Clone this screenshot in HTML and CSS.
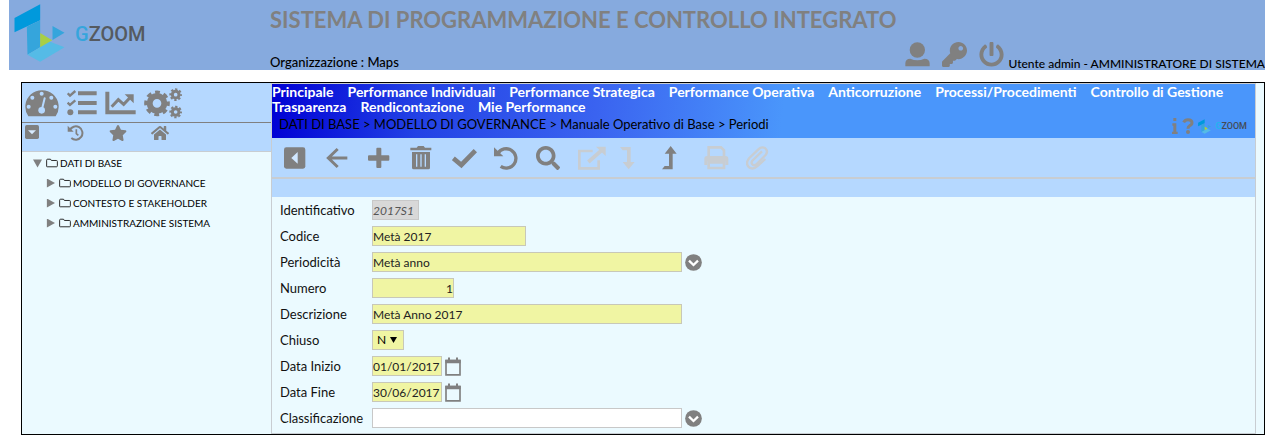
FILE: index.html
```html
<!DOCTYPE html>
<html lang="it">
<head>
<meta charset="utf-8">
<title>GZOOM - Periodi</title>
<link rel="stylesheet" href="styles.css">
</head>
<body>
<svg class="defs" aria-hidden="true">
  <symbol id="logo" viewBox="42 13 152 174">
    <path fill="#0099dc" d="M43 55L120 14V62L43 98z"/>
    <path fill="#35a5dc" d="M80 81L120 62V143L82 165z"/>
    <path fill="#55bbe6" d="M82 165L120 143L138 122L193 143L120 186z"/>
    <path fill="#a8cf45" d="M120 100L156 122L120 143z"/>
    <path fill="#35a5dc" d="M157 79L193 99L157 121z"/>
  </symbol>
  <symbol id="chevron" viewBox="0 0 51 51">
    <circle cx="25.500" cy="25.500" r="25" fill="#808080"/>
    <path d="M12 20L25.500 33L39 20" fill="none" stroke="#fff" stroke-width="7"/>
  </symbol>
  <symbol id="calendar" viewBox="0 0 48 56">
    <path d="M3 10H45V53H3z" fill="none" stroke="#808080" stroke-width="5"/>
    <path d="M1 8H47V18H1zM9 1h6v10H9zM33 1h6v10h-6z" fill="#808080"/>
  </symbol>
  <symbol id="folder" viewBox="0 0 38 30">
    <path d="M2 26V6Q2 3 5 3H13Q16 3 17 7H33Q36 7 36 10V24Q36 27 33 27H4Q2 27 2 26z" fill="none" stroke="#222" stroke-width="3"/>
  </symbol>
</svg>

<header class="header">
  <a class="brand" href="#"><svg class="brand-mark"><use href="#logo"/></svg><span class="brand-name"><span class="brand-g">G</span>ZOOM</span></a>
  <div class="heading">
    <h1>SISTEMA DI PROGRAMMAZIONE E CONTROLLO INTEGRATO</h1>
    <div class="subheading">
      <p>Organizzazione : Maps</p>
      <div class="user">
        <div class="user-tools">
          <button class="icon" aria-label="Utente"><svg width="25" height="25" viewBox="0 0 75 75"><circle cx="37" cy="24" r="23"/><path d="M1 73V64Q1 50 16 50Q37 59 58 50Q74 50 74 64V73z"/></svg></button>
          <button class="icon" aria-label="Password"><svg width="25" height="25" viewBox="0 0 512 512"><path d="M512 176C512 273 433 352 336 352c-11 0-22-1-33-3l-24 27A24 24 0 0 1 261 384H224v40c0 13-11 24-24 24h-40v40c0 13-11 24-24 24H24c-13 0-24-11-24-24v-78c0-6 3-12 7-17l162-162C163 214 160 195 160 176 160 79 239 0 336 0 433 0 512 79 512 176zM336 128c0 27 21 48 48 48s48-21 48-48-21-48-48-48-48 21-48 48z"/></svg></button>
          <button class="icon" aria-label="Esci"><svg width="25" height="25" viewBox="0 0 512 512"><path d="M400 54c63 45 104 119 104 202 0 137-111 248-248 248C120 504 8 393 8 256 8 173 49 99 112 54c12-8 28-5 35 8L163 90c6 11 3 24-7 31-42 31-68 80-68 135 0 92 75 168 168 168 92 0 169-74 168-169 0-52-25-102-68-134-10-7-12-21-7-31l16-28c7-12 23-16 35-8zM296 264V24c0-13-11-24-24-24h-32c-13 0-24 11-24 24v240c0 13 11 24 24 24h32c13 0 24-11 24-24z"/></svg></button>
        </div>
        <span>Utente admin - AMMINISTRATORE DI SISTEMA</span>
      </div>
    </div>
  </div>
</header>

<div class="workspace">
  <aside class="sidebar">
    <div class="side-tools">
      <div class="side-main">
        <button class="icon" aria-label="Cruscotto"><svg width="34" height="28" viewBox="76 264 102 84"><path d="M86 346A50 50 0 1 1 168 346z"/><g fill="#b5d8ff"><circle cx="87" cy="317" r="6"/><circle cx="98" cy="290" r="6"/><circle cx="126" cy="278" r="6"/><circle cx="155" cy="290" r="6"/><circle cx="167" cy="317" r="6"/><circle cx="126" cy="328" r="10"/></g><path d="M127 324L135 292" stroke="#b5d8ff" stroke-width="6" stroke-linecap="round"/></svg></button>
        <button class="icon" aria-label="Attività"><svg width="30" height="26" viewBox="200 266 90 78"><path d="M233 270h56v12h-56zM233 299h56v12h-56zM233 327h56v12h-56z"/><circle cx="210" cy="333" r="9"/><path d="M202 276L209 283L225 269M202 304L209 311L225 297" fill="none" stroke="#808080" stroke-width="7"/></svg></button>
        <button class="icon" aria-label="Grafici"><svg width="31" height="24" viewBox="314 268 93 72"><path d="M321 270V332H406" fill="none" stroke="#808080" stroke-width="12"/><path d="M334 315L354 294L370 308L391 286" fill="none" stroke="#808080" stroke-width="9"/><path d="M373 278H400V305z"/></svg></button>
        <button class="icon" aria-label="Impostazioni"><svg width="39" height="31" viewBox="431 259 117 93"><g fill="none" stroke="#808080"><circle cx="470" cy="305" r="22" stroke-width="18"/><circle cx="470" cy="305" r="33" stroke-width="11" pathLength="160" stroke-dasharray="11 9" stroke-dashoffset="5"/><circle cx="526" cy="279" r="10" stroke-width="9"/><circle cx="526" cy="279" r="16" stroke-width="6" pathLength="160" stroke-dasharray="11 9" stroke-dashoffset="5"/><circle cx="526" cy="331" r="10" stroke-width="9"/><circle cx="526" cy="331" r="16" stroke-width="6" pathLength="160" stroke-dasharray="11 9" stroke-dashoffset="5"/></g></svg></button>
      </div>
      <div class="side-sub">
        <button class="icon" aria-label="Menu"><svg width="14" height="14" viewBox="0 0 42 42"><rect width="42" height="42" rx="5"/><path d="M9 16H33L21 28z" fill="#d8ebff"/></svg></button>
        <button class="icon" aria-label="Cronologia"><svg width="17" height="16" viewBox="0 0 51 48"><path d="M8 16A20 20 0 1 1 13 39" fill="none" stroke="#808080" stroke-width="6"/><path d="M2 2V20H20z"/><path d="M28 13V26L34 31" fill="none" stroke="#808080" stroke-width="5"/></svg></button>
        <button class="icon" aria-label="Preferiti"><svg width="18" height="16" viewBox="0 0 576 512"><path d="M259 18L194 150 48 171c-26 4-37 36-18 55l106 103-25 146c-5 26 23 46 46 34L288 440l131 69c23 12 51-7 46-34l-25-146 106-103c19-19 9-51-18-55L382 150 317 18c-12-24-46-24-58 0z"/></svg></button>
        <button class="icon" aria-label="Home"><svg width="18" height="16" viewBox="0 0 576 512"><path d="M280 148L96 300V464a16 16 0 0 0 16 16h112a16 16 0 0 0 16-16V368a16 16 0 0 1 16-16h64a16 16 0 0 1 16 16v96a16 16 0 0 0 16 16H464a16 16 0 0 0 16-16V300L296 148a12 12 0 0 0-16 0zM572 251L488 183V44a12 12 0 0 0-12-12h-56a12 12 0 0 0-12 12v73L318 43a48 48 0 0 0-61 0L4 251a12 12 0 0 0-1 17l25 31A12 12 0 0 0 45 301L280 107a12 12 0 0 1 16 0L531 301a12 12 0 0 0 17-2l25-31a12 12 0 0 0-1-17z"/></svg></button>
      </div>
    </div>
    <ul class="tree">
      <li><span class="caret open"></span><svg class="folder"><use href="#folder"/></svg>DATI DI BASE</li>
      <li class="child"><span class="caret"></span><svg class="folder"><use href="#folder"/></svg>MODELLO DI GOVERNANCE</li>
      <li class="child"><span class="caret"></span><svg class="folder"><use href="#folder"/></svg>CONTESTO E STAKEHOLDER</li>
      <li class="child"><span class="caret"></span><svg class="folder"><use href="#folder"/></svg>AMMINISTRAZIONE SISTEMA</li>
    </ul>
  </aside>

  <main class="main">
    <div class="banner">
      <nav class="menu">
        <a href="#">Principale</a><a href="#">Performance Individuali</a><a href="#">Performance Strategica</a><a href="#">Performance Operativa</a><a href="#">Anticorruzione</a><a href="#">Processi/Procedimenti</a><a href="#">Controllo di Gestione</a><a href="#">Trasparenza</a><a href="#">Rendicontazione</a><a href="#">Mie Performance</a>
      </nav>
      <div class="crumbs">
        <span>DATI DI BASE &gt; MODELLO DI GOVERNANCE &gt; Manuale Operativo di Base &gt; Periodi</span>
        <span class="help">
          <button class="icon" aria-label="Informazioni"><svg width="6" height="16" viewBox="0 0 18 48"><path d="M4 0h9v9H4zM1 16h12v25h4v7H0v-7h4V23H1z"/></svg></button>
          <button class="icon" aria-label="Aiuto"><svg width="12" height="16" viewBox="0 0 36 48"><path d="M5 13Q9 5 18 5Q30 5 30 14Q30 20 23 23Q18 26 18 32" fill="none" stroke="#808080" stroke-width="9"/><circle cx="18" cy="42" r="6"/></svg></button>
          <svg class="mini-mark"><use href="#logo"/></svg>
          <span class="mini-name"><span class="mini-g">G</span>ZOOM</span>
        </span>
      </div>
    </div>

    <div class="toolbar">
      <button class="icon" aria-label="Chiudi pannello"><svg width="22" height="24" viewBox="0 0 66 72"><rect x="0" y="4" width="64" height="64" rx="7"/><path d="M41 18V53L22 36z" fill="#d0e7ff"/></svg></button>
      <button class="icon" aria-label="Indietro"><svg width="22" height="24" viewBox="0 0 66 72"><path d="M35 9L7 36L35 63M8 36H64" fill="none" stroke="#808080" stroke-width="9"/></svg></button>
      <button class="icon" aria-label="Nuovo"><svg width="22" height="24" viewBox="0 0 66 72"><path d="M25 8Q25 5 28 5H37Q40 5 40 8V28H61Q64 28 64 31V41Q64 44 61 44H40V63Q40 66 37 66H28Q25 66 25 63V44H3Q0 44 0 41V31Q0 28 3 28H25z"/></svg></button>
      <button class="icon" aria-label="Elimina"><svg width="22" height="24" viewBox="0 0 66 72"><path d="M1 5H20L24 0H41L45 5H64V13H1zM6 18H60V65Q60 70 55 70H11Q6 70 6 65z"/><path d="M20 25V62M33 25V62M46 25V62" stroke="#b5d8ff" stroke-width="4"/></svg></button>
      <button class="icon" aria-label="Salva"><svg width="25" height="24" viewBox="0 0 75 72"><path d="M4 37L28 57L70 14" fill="none" stroke="#808080" stroke-width="14"/></svg></button>
      <button class="icon" aria-label="Annulla"><svg width="25" height="24" viewBox="0 0 75 72"><path d="M12 22A29 29 0 1 1 20 61" fill="none" stroke="#808080" stroke-width="10"/><path d="M0 4V31H28z"/></svg></button>
      <button class="icon" aria-label="Cerca"><svg width="24" height="24" viewBox="0 0 512 512"><path d="M505 443L405 343c-5-5-11-7-17-7H372c28-35 44-80 44-128C416 93 323 0 208 0S0 93 0 208s93 208 208 208c48 0 93-16 128-44v16c0 6 3 13 7 17l100 100c9 9 25 9 34 0l28-28c9-9 9-25 0-34zM208 336c-71 0-128-57-128-128 0-71 57-128 128-128 71 0 128 57 128 128 0 71-57 128-128 128z"/></svg></button>
      <button class="icon off" disabled aria-label="Apri"><svg width="28" height="24" viewBox="0 0 84 72"><g fill="none" stroke="#c8cdd2"><path d="M44 15H4V67H62V43" stroke-width="8"/><path d="M31 48L72 12" stroke-width="11"/></g><path d="M54 2H83V30z"/></svg></button>
      <button class="icon off" disabled aria-label="Scendi"><svg width="16" height="24" viewBox="0 0 48 72"><path d="M0 3H32V48H44L26 70L8 48H21V13H8z"/></svg></button>
      <button class="icon" aria-label="Sali"><svg width="16" height="24" viewBox="0 0 48 72"><path d="M0 70H32V23H44L26 0L8 23H21V60H8z"/></svg></button>
      <button class="icon off" disabled aria-label="Stampa"><svg width="25" height="24" viewBox="0 0 75 72"><path d="M14 33V4H51L60 13V33" fill="none" stroke="#c8cdd2" stroke-width="8"/><path d="M9 30H65Q73 30 73 38V57H64V46H10V57H1V38Q1 30 9 30z"/><path d="M14 49H60V66H14z" fill="none" stroke="#c8cdd2" stroke-width="8"/></svg></button>
      <button class="icon off" disabled aria-label="Allegati"><svg width="23" height="24" viewBox="0 0 69 72"><path d="M48 16L19 44Q14 51 20 56Q26 60 32 54L58 28Q68 16 58 7Q47 0 37 10L10 36Q-3 51 8 63Q21 73 35 60L58 39" fill="none" stroke="#c8cdd2" stroke-width="7"/></svg></button>
    </div>
    <div class="strip"></div>

    <form class="form">
      <label for="ident">Identificativo</label><div><input id="ident" class="w-id" value="2017S1" readonly></div>
      <label for="codice">Codice</label><div><input id="codice" class="w-code" value="Metà 2017"></div>
      <label for="period">Periodicità</label><div><input id="period" class="w-long" value="Metà anno"><button type="button" class="icon" aria-label="Scegli periodicità"><svg class="chev"><use href="#chevron"/></svg></button></div>
      <label for="numero">Numero</label><div><input id="numero" class="w-num" value="1"></div>
      <label for="descr">Descrizione</label><div><input id="descr" class="w-long" value="Metà Anno 2017"></div>
      <label for="chiuso">Chiuso</label><div class="select"><select id="chiuso"><option>N</option><option>S</option></select></div>
      <label for="inizio">Data Inizio</label><div><input id="inizio" class="w-date" value="01/01/2017"><button type="button" class="icon" aria-label="Calendario inizio"><svg class="cal"><use href="#calendar"/></svg></button></div>
      <label for="fine">Data Fine</label><div><input id="fine" class="w-date" value="30/06/2017"><button type="button" class="icon" aria-label="Calendario fine"><svg class="cal"><use href="#calendar"/></svg></button></div>
      <label for="classif">Classificazione</label><div><input id="classif" class="w-long plain"><button type="button" class="icon" aria-label="Scegli classificazione"><svg class="chev"><use href="#chevron"/></svg></button></div>
    </form>
  </main>
</div>
</body>
</html>
```
FILE: styles.css
```css
* { box-sizing: border-box; }
body {
  margin: 0 10px 12px 9px;
  background: #fff;
  color: #000;
  font-family: "Trebuchet MS", Lato, sans-serif;
  font-size: 12px;
  line-height: 16px;
}
.defs { display: none; }
a { color: inherit; text-decoration: none; }
svg { display: block; flex: none; }
.icon {
  display: flex;
  padding: 0;
  border: 0;
  background: none;
  fill: #808080;
}
.icon.off { fill: #c8cdd2; }

.header {
  display: flex;
  height: 70px;
  background: #86aade;
}
.brand {
  display: flex;
  flex: none;
  gap: 10px;
  width: 261px;
  padding: 4px 0 0 5px;
}
.brand-mark { width: 51px; height: 58px; }
.brand-name {
  padding-top: 17px;
  color: #555a60;
  font: 500 20px/26px Roboto, sans-serif;
}
.brand-g { color: #35a5dc; }
.heading {
  display: flex;
  flex: 1;
  flex-direction: column;
  justify-content: space-between;
}
h1 {
  margin: 0;
  padding-top: 6px;
  color: #808080;
  font-size: 22px;
  line-height: 28px;
}
.subheading {
  display: flex;
  justify-content: space-between;
  align-items: flex-end;
  font-weight: 500;
}
.subheading p { margin: 0; font-size: 13px; }
.user { display: flex; gap: 4px; align-items: flex-end; }
.user-tools { display: flex; gap: 12px; padding-bottom: 3px; }
.user > span { line-height: 12px; }

.workspace {
  display: flex;
  margin: 12px 0 0 12px;
  border: 1px solid #000;
  background: #ebfaff;
}
.sidebar { flex: none; width: 249px; }
.side-tools {
  padding-top: 1px;
  border-bottom: 1px solid #c8cdd2;
  background: #b5d8ff;
}
.side-main {
  display: flex;
  align-items: center;
  gap: 8px;
  height: 39px;
  padding-left: 3px;
  border-bottom: 1px solid #808080;
}
.side-sub {
  display: grid;
  grid-template-columns: repeat(4, 42px);
  height: 28px;
  padding: 2px 0 0 3px;
}
.tree {
  margin: 0;
  padding: 1px 0 0 11px;
  list-style: none;
  font-size: 10px;
}
.tree li { display: flex; align-items: center; height: 20px; }
.tree .child { padding-left: 13px; }
.caret {
  width: 9px;
  height: 9px;
  background: #808080;
  clip-path: polygon(10% 0, 100% 50%, 10% 100%);
}
.caret.open { clip-path: polygon(0 10%, 100% 10%, 50% 100%); }
.folder { width: 12px; height: 10px; margin: 0 2px 0 4px; }

.main {
  flex: 1;
  min-width: 0;
  margin-right: 8px;
  border: 1px solid #c8cdd2;
}
.banner {
  height: 54px;
  background: linear-gradient(95deg, #0000d4, #2342e5 15%, #3a63f0 33%, #4a96fb 52%);
}
.menu {
  display: flex;
  flex-wrap: wrap;
  column-gap: 14px;
  color: #fff;
  font-size: 14px;
  font-weight: 700;
  line-height: 15px;
}
.crumbs {
  display: flex;
  justify-content: space-between;
  align-items: center;
  height: 20px;
  padding: 0 8px 0 7px;
  font-size: 13px;
}
.help { display: flex; align-items: center; gap: 4px; padding-top: 4px; }
.mini-mark { width: 13px; height: 15px; }
.mini-name { color: #444b55; font: 500 9px/12px Roboto, sans-serif; }
.mini-g { color: #22b4f0; }
.toolbar {
  display: grid;
  grid-template-columns: repeat(12, 42px);
  align-items: center;
  height: 41px;
  padding: 1px 0 0 12px;
  border-bottom: 2px solid #c8cdd2;
  background: #b5d8ff;
}
.strip { height: 18px; background: #b5d8ff; }

.form {
  display: grid;
  grid-template-columns: 92px 1fr;
  row-gap: 6px;
  padding: 3px 0 5px 8px;
}
.form > * { display: flex; align-items: center; height: 20px; }
.form > div { gap: 3px; }
.form input, .form select {
  height: 20px;
  margin: 0;
  padding: 0;
  border: 1px solid #c8c8b8;
  border-radius: 0;
  background: #f0f5a3;
  color: #222;
  font: inherit;
}
.form label { color: #111; font-size: 13px; }
.form .w-id { width: 47px; border-color: #c8c8c8; background: #d8d8d8; color: #555; font-style: italic; }
.form .w-code { width: 154px; }
.form .w-long { width: 310px; }
.form .w-num { width: 82px; text-align: right; }
.form .w-date { width: 70px; }
.form .plain { border-color: #c8c8c8; background: #fff; }
.form select { width: 32px; padding: 0 0 0 4px; appearance: none; color: #000; }
.select { position: relative; }
.select::after {
  position: absolute;
  left: 18px;
  width: 7px;
  height: 6px;
  background: #000;
  clip-path: polygon(0 0, 100% 0, 50% 100%);
  content: "";
}
.chev { width: 17px; height: 17px; }
.cal { width: 16px; height: 19px; }
```
